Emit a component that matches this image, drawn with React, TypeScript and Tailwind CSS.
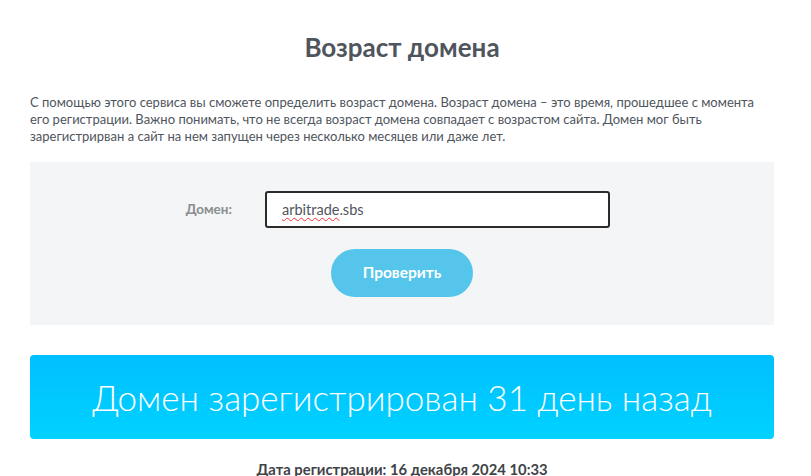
export default function App() {
  return (
    <div className="min-h-screen bg-white font-['Lato',sans-serif] text-[#4d5359]">
      <div className="ml-[30px] w-[744px]">
        <h1 className="pt-[30px] text-center text-[26px] font-bold leading-[34px] text-[#4f555c]">Возраст домена</h1>

        <p className="mt-[30px] text-[13px] leading-[17px] text-[#4f555c]">
          С помощью этого сервиса вы сможете определить возраст домена. Возраст домена – это время, прошедшее с момента
          <br />
          его регистрации. Важно понимать, что не всегда возраст домена совпадает с возрастом сайта. Домен мог быть
          <br />
          зарегистрирван а сайт на нем запущен через несколько месяцев или даже лет.
        </p>

        <div className="mt-[17px] h-[163px] bg-[#f3f5f6] pt-[29px]">
          <div className="flex items-center">
            <label className="w-[235px] pr-[33px] text-right text-[13.5px] font-bold text-[#8a8d90]">Домен:</label>
            <div className="flex h-[37px] w-[345px] items-center rounded-[3px] border-2 border-[#2b2b2b] bg-white px-[15px] text-[14.5px] text-[#4f555c]">
              <span className="underline decoration-wavy decoration-red-500 decoration-1 underline-offset-2">arbitrade</span>
              <span>.sbs</span>
            </div>
          </div>
          <div className="mt-[21px] flex justify-center">
            <button className="h-[48px] w-[142px] rounded-full bg-[#55c5ec] text-[15.5px] font-bold text-white">Проверить</button>
          </div>
        </div>

        <div className="mt-[30px] flex h-[84px] items-center justify-center rounded-[4px] bg-gradient-to-b from-[#00bfff] to-[#00d2ff] text-[35px] font-light text-white">
          Домен зарегистрирован 31 день назад
        </div>

        <p className="mt-[19px] text-center text-[14.8px] font-bold text-[#3f4348]">Дата регистрации: 16 декабря 2024 10:33</p>
      </div>
    </div>
  )
}
